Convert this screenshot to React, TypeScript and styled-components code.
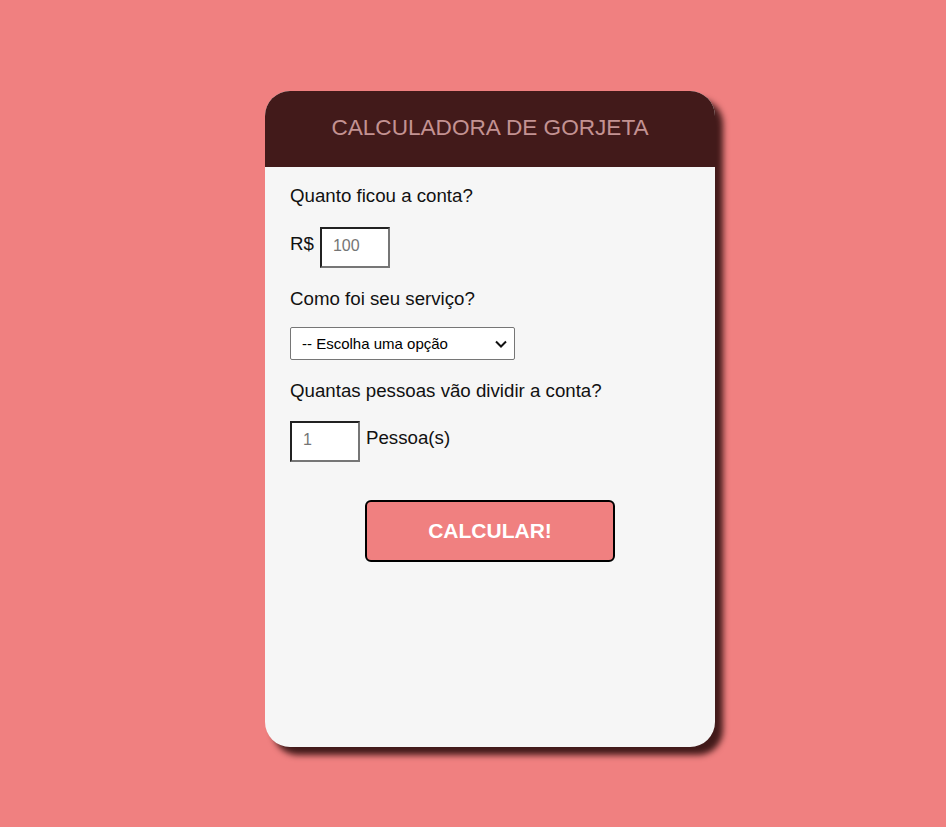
import styled, { createGlobalStyle } from "styled-components";

const GlobalStyle = createGlobalStyle`
  html, body {
    margin: 0;
    padding: 0;
    background: #f08080;
    font-family: "Liberation Sans", Arial, sans-serif;
  }
`;

const Page = styled.div`
  min-height: 827px;
  padding: 91px 0 0 265px;
  box-sizing: border-box;
`;

const Card = styled.div`
  width: 450px;
  height: 656px;
  background: #f6f6f6;
  border-radius: 25px;
  overflow: hidden;
  box-shadow: 8px 8px 6px #421a1a;
  display: flex;
  flex-direction: column;
`;

const Header = styled.div`
  height: 76px;
  padding-bottom: 2px;
  box-sizing: border-box;
  background: #421a1a;
  display: flex;
  align-items: center;
  justify-content: center;
`;

const Title = styled.h1`
  margin: 0;
  font-size: 22.6px;
  font-weight: normal;
  color: #c39292;
`;

const Body = styled.div`
  padding: 18px 25px 0;
  display: flex;
  flex-direction: column;
`;

const Label = styled.p`
  margin: 0;
  font-size: 18.7px;
  line-height: 21px;
  color: #111;
`;

const Row = styled.div<{ $top: number }>`
  display: flex;
  align-items: flex-start;
  gap: 6px;
  margin: ${(p) => p.$top}px 0 20px;
  font-size: 18.7px;
  color: #111;
`;

const Unit = styled.span`
  line-height: 21px;
  margin-top: 6px;
`;

const NumberInput = styled.input`
  width: 70px;
  height: 41px;
  box-sizing: border-box;
  border: 2px inset #767676;
  padding: 0 0 3px 11px;
  font-family: "Liberation Sans", Arial, sans-serif;
  font-size: 16px;
  background: #fff;
  &::placeholder {
    color: #757575;
  }
`;

const Select = styled.select`
  appearance: none;
  width: 225px;
  height: 33px;
  margin: 18px 0 20px;
  font-family: "Liberation Sans", Arial, sans-serif;
  font-size: 15px;
  border: 1px solid #767676;
  border-radius: 2px;
  color: #000;
  padding: 0 24px 0 11px;
  background-color: #fff;
  background-image: url("data:image/svg+xml;utf8,<svg xmlns='http://www.w3.org/2000/svg' width='12' height='8' viewBox='0 0 12 8'><path d='M1 1.5 L6 6.5 L11 1.5' fill='none' stroke='%23111' stroke-width='2'/></svg>");
  background-repeat: no-repeat;
  background-position: right 7px center;
`;

const ButtonWrap = styled.div`
  display: flex;
  justify-content: center;
  margin-top: 18px;
`;

const Button = styled.button`
  width: 250px;
  height: 62px;
  background: #f08080;
  border: 2px solid #000;
  border-radius: 6px;
  color: #fff;
  font-family: "Liberation Sans", Arial, sans-serif;
  font-weight: bold;
  font-size: 21px;
  cursor: pointer;
`;

const App = () => {
  return (
    <>
      <GlobalStyle />
      <Page>
        <Card>
          <Header>
            <Title>CALCULADORA DE GORJETA</Title>
          </Header>
          <Body>
            <Label>Quanto ficou a conta?</Label>
            <Row $top={21}>
              <Unit>R$</Unit>
              <NumberInput type="number" placeholder="100" />
            </Row>
            <Label>Como foi seu serviço?</Label>
            <Select defaultValue="">
              <option value="">-- Escolha uma opção</option>
              <option value="0.3">30% - Muito bom</option>
              <option value="0.1">10% - Bom</option>
              <option value="0.05">5% - Ruim</option>
            </Select>
            <Label>Quantas pessoas vão dividir a conta?</Label>
            <Row $top={20}>
              <NumberInput type="number" placeholder="1" />
              <Unit>Pessoa(s)</Unit>
            </Row>
            <ButtonWrap>
              <Button>CALCULAR!</Button>
            </ButtonWrap>
          </Body>
        </Card>
      </Page>
    </>
  );
};

export default App;
